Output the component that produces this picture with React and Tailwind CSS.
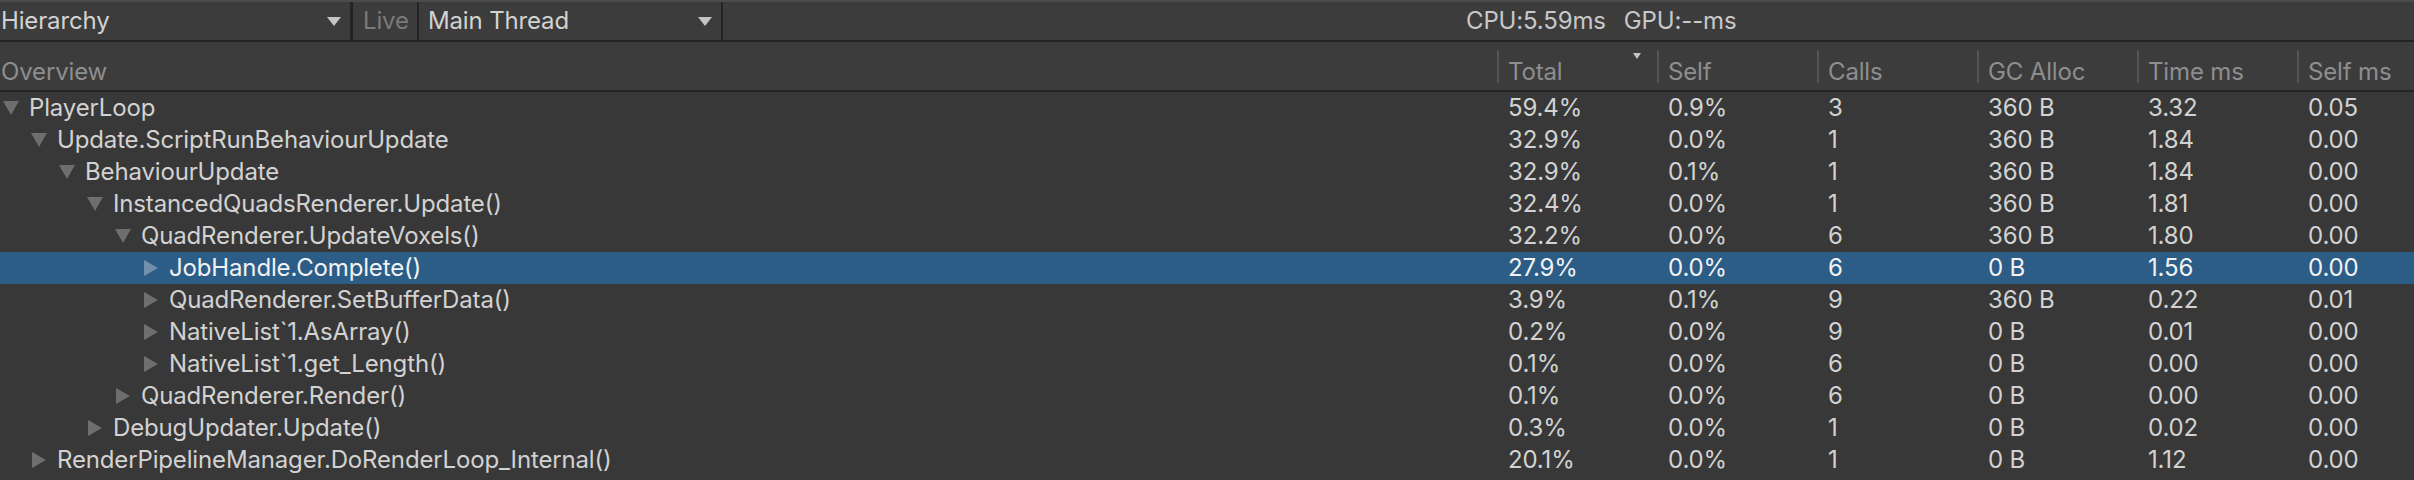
const rows = [
    {name: 'PlayerLoop', level: 0, open: true, v: ['59.4%', '0.9%', '3', '360 B', '3.32', '0.05']},
    {name: 'Update.ScriptRunBehaviourUpdate', level: 1, open: true, v: ['32.9%', '0.0%', '1', '360 B', '1.84', '0.00']},
    {name: 'BehaviourUpdate', level: 2, open: true, v: ['32.9%', '0.1%', '1', '360 B', '1.84', '0.00']},
    {name: 'InstancedQuadsRenderer.Update()', level: 3, open: true, v: ['32.4%', '0.0%', '1', '360 B', '1.81', '0.00']},
    {name: 'QuadRenderer.UpdateVoxels()', level: 4, open: true, v: ['32.2%', '0.0%', '6', '360 B', '1.80', '0.00']},
    {name: 'JobHandle.Complete()', level: 5, selected: true, v: ['27.9%', '0.0%', '6', '0 B', '1.56', '0.00']},
    {name: 'QuadRenderer.SetBufferData()', level: 5, v: ['3.9%', '0.1%', '9', '360 B', '0.22', '0.01']},
    {name: 'NativeList`1.AsArray()', level: 5, v: ['0.2%', '0.0%', '9', '0 B', '0.01', '0.00']},
    {name: 'NativeList`1.get_Length()', level: 5, v: ['0.1%', '0.0%', '6', '0 B', '0.00', '0.00']},
    {name: 'QuadRenderer.Render()', level: 4, v: ['0.1%', '0.0%', '6', '0 B', '0.00', '0.00']},
    {name: 'DebugUpdater.Update()', level: 3, v: ['0.3%', '0.0%', '1', '0 B', '0.02', '0.00']},
    {name: 'RenderPipelineManager.DoRenderLoop_Internal()', level: 1, v: ['20.1%', '0.0%', '1', '0 B', '1.12', '0.00']},
];

const columns = ['Total', 'Self', 'Calls', 'GC Alloc', 'Time ms', 'Self ms'];

function DropArrow() {
    return (
        <svg width="14" height="9" viewBox="0 0 14 9" className="shrink-0">
            <path d="M0 0 H14 L7 9 Z" fill="#c4c4c4" />
        </svg>
    );
}

function Foldout(props) {
    const color = props.selected ? '#7190ad' : '#6e6e6e';
    return (
        <div className="w-[18px] h-[32px] flex items-center justify-center shrink-0">
            {props.open ? (
                <svg width="16" height="14" viewBox="0 0 16 14">
                    <path d="M0 0 H16 L8 14 Z" fill={color} />
                </svg>
            ) : (
                <svg width="14" height="16" viewBox="0 0 14 16">
                    <path d="M0 0 L14 8 L0 16 Z" fill={color} />
                </svg>
            )}
        </div>
    );
}

export default function App() {
    return (
        <div className="w-[2414px] h-[480px] overflow-hidden bg-[#383838] font-['Inter','Liberation_Sans',sans-serif] text-[24px] tracking-[-0.15px]">
            <div className="h-[2px] bg-[#4b4b4b]"></div>

            {/* toolbar */}
            <div className="h-[38px] flex bg-[#3c3c3c] text-[#d2d2d2] leading-[38px]">
                <div className="w-[350px] flex items-center justify-between pl-[1px] pr-[9px]">
                    <span>Hierarchy</span>
                    <DropArrow />
                </div>
                <div className="w-[3px] bg-[#232323]"></div>
                <div className="w-[64px] pl-[10px] text-[#7a7a7a]">Live</div>
                <div className="w-[2px] bg-[#232323]"></div>
                <div className="w-[302px] flex items-center justify-between pl-[9px] pr-[9px]">
                    <span>Main Thread</span>
                    <DropArrow />
                </div>
                <div className="w-[2px] bg-[#232323]"></div>
                <div className="flex-1 flex gap-[18px] pl-[743px] text-[#c8c8c8]">
                    <span>CPU:5.59ms</span>
                    <span>GPU:--ms</span>
                </div>
            </div>
            <div className="h-[2px] bg-[#232323]"></div>

            {/* header */}
            <div className="h-[48px] flex bg-[#3c3c3c] text-[#8e8e8e]">
                <div className="w-[1497px] pl-[1px] pt-[18px] leading-[24px]">Overview</div>
                {columns.map((col, i) => (
                    <div key={col} className={i === 5 ? 'flex-1 flex items-start' : 'w-[160px] flex items-start'}>
                        <div className="mt-[8px] h-[33px] w-[2px] bg-[#545454]"></div>
                        <div className="ml-[9px] mt-[18px] leading-[24px]">{col}</div>
                        {i === 0 && (
                            <svg width="8" height="6" viewBox="0 0 8 6" className="ml-auto mr-[16px] mt-[11px]">
                                <path d="M0 0 H8 L4 6 Z" fill="#c4c4c4" />
                            </svg>
                        )}
                    </div>
                ))}
            </div>
            <div className="h-[2px] bg-[#232323]"></div>

            {/* rows */}
            <div>
                {rows.map((row) => (
                    <div
                        key={row.name}
                        className={row.selected
                            ? 'h-[32px] flex bg-[#2c5d87] text-[#f2f2f2] leading-[32px]'
                            : 'h-[32px] flex text-[#d2d2d2] leading-[32px]'}
                    >
                        <div className="w-[1497px] flex" style={{paddingLeft: 2 + row.level * 28}}>
                            <Foldout open={row.open} selected={row.selected} />
                            <span className="ml-[9px]">{row.name}</span>
                        </div>
                        {row.v.map((val, i) => (
                            <div key={i} className={i === 5 ? 'flex-1 pl-[11px]' : 'w-[160px] pl-[11px]'}>
                                {val}
                            </div>
                        ))}
                    </div>
                ))}
            </div>
        </div>
    );
}
